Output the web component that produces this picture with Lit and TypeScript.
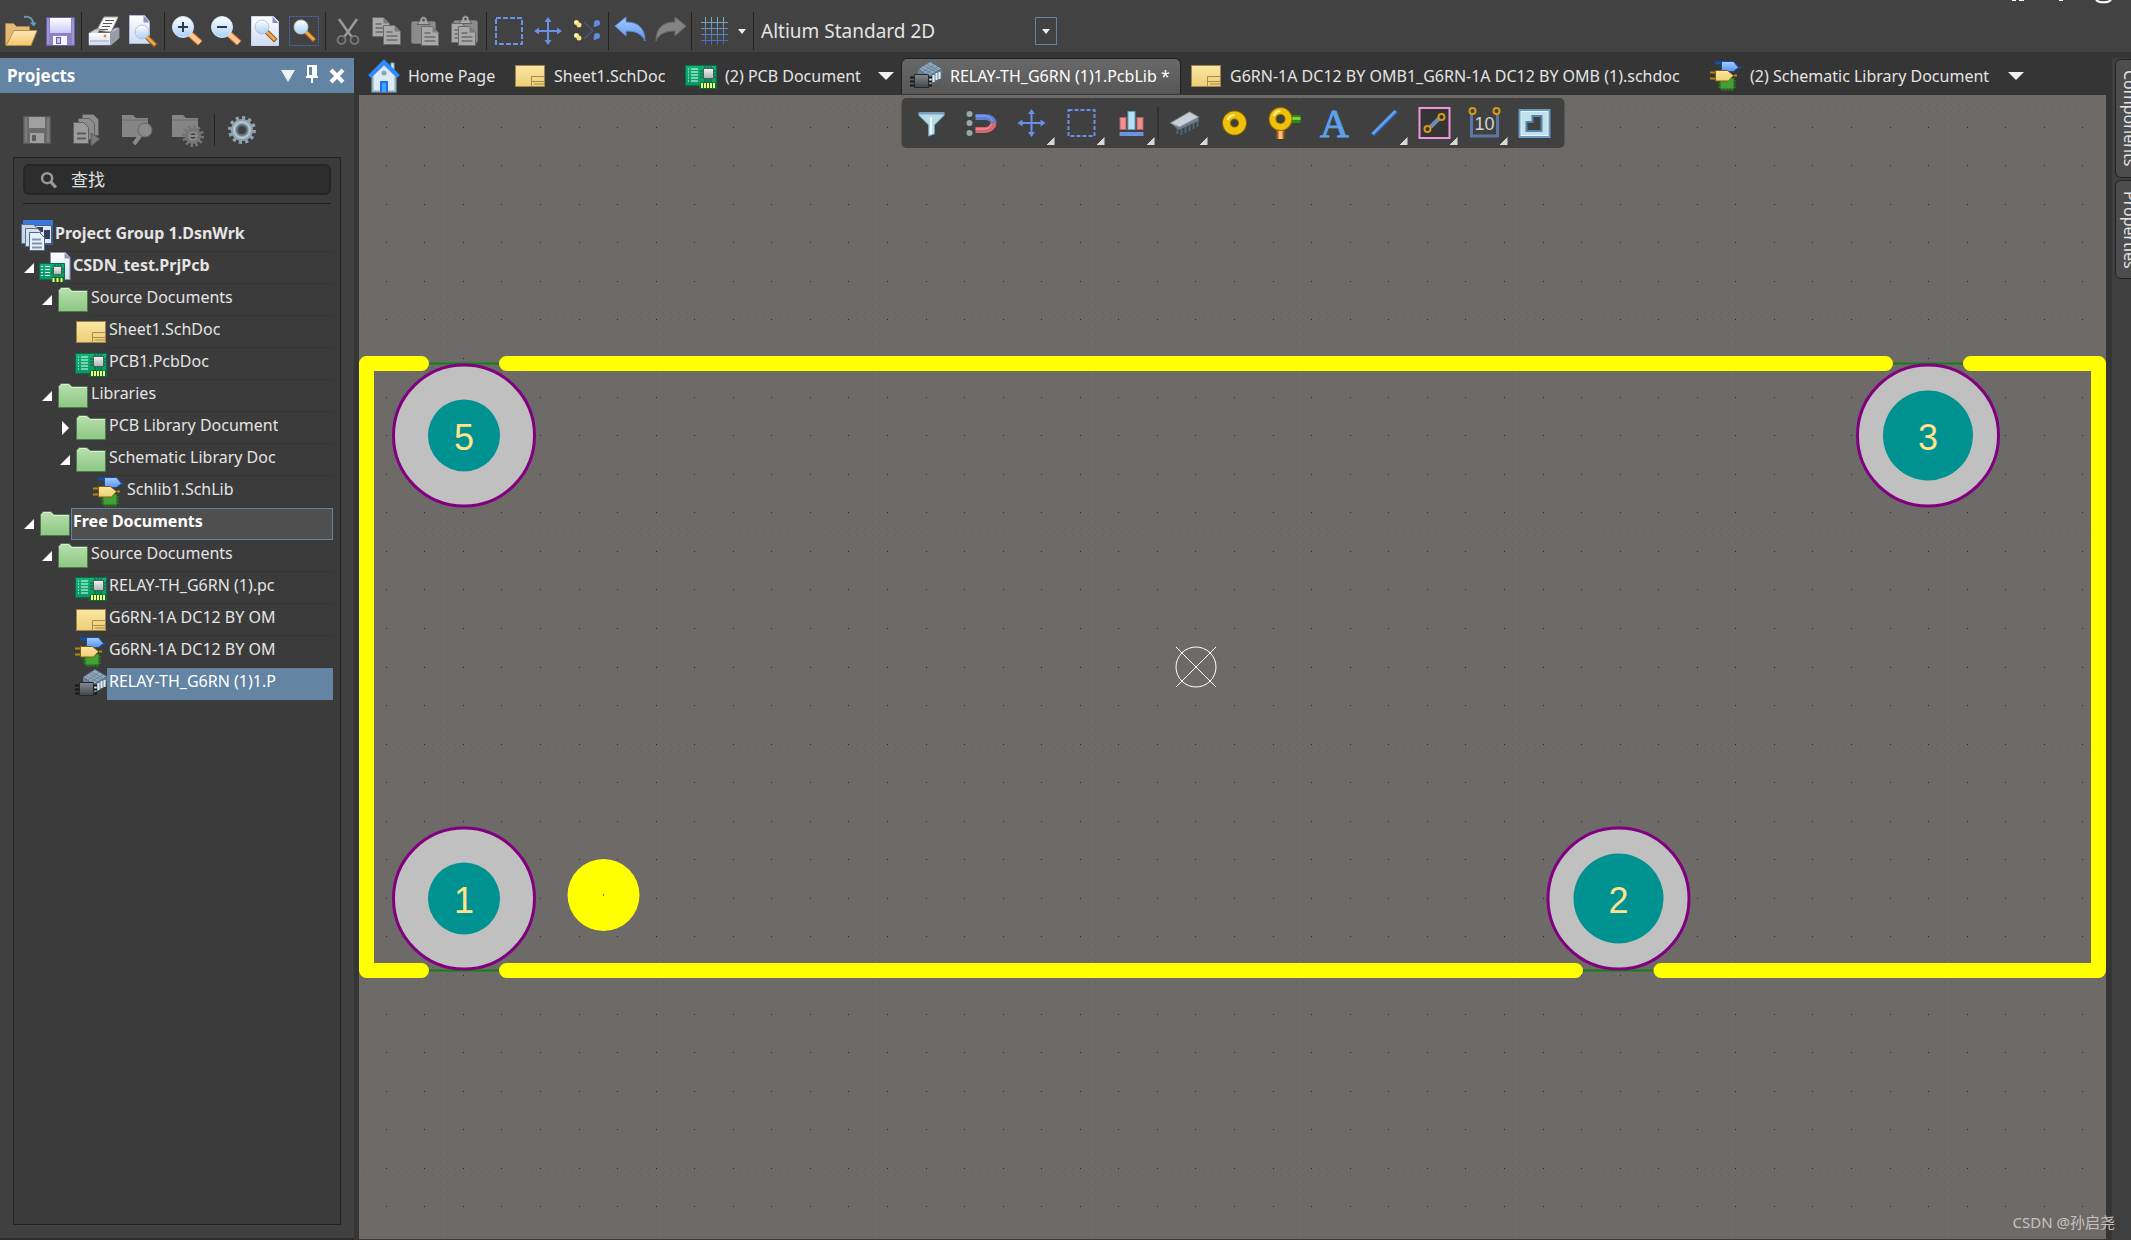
import { LitElement, html, css, svg, nothing } from "lit";
import { customElement, state } from "lit/decorators.js";
import { classMap } from "lit/directives/class-map.js";

/* ---------- shared icon fragments, all on a 32 x 32 grid ---------- */

const sheet = svg`
  <rect x="1.5" y="5.5" width="29" height="21" fill="url(#gSheet)" stroke="#9c8450"/>
  <path d="M17.5 26.5v-10h13M17.5 21.5h13M20 24h10" fill="none" stroke="#a58b50"/>`;

const board = svg`
  <path d="M.5 5.5h31v23h-17v-3h-14z" fill="url(#gBoard)" stroke="#05704a"/>
  <path d="M3 9h1m2 0h7M3 12h1m2 0h7M3 15h1m2 0h7M3 18h1m2 0h7M3 21h1m2 0h7" stroke="#e8fff4" stroke-width="1.2" fill="none"/>
  <path d="M20 6v4m3-4v4m3-4v4M15 11h4m-4 3h4m-4 3h4m10-6h2m-2 3h2m-2 3h2M20 19v4m3-4v4m3-4v4" stroke="#0b5a3c" fill="none"/>
  <rect x="18.5" y="8.5" width="10" height="10" fill="url(#gMetal)" stroke="#49605a"/>
  <path d="M15 22.5h16v6h-16z" fill="#096a2c"/>
  <path d="M17 23v5m3-5v5m3-5v5m3-5v5m3-5v5" stroke="#f4ff77" stroke-width="2" fill="none"/>`;

const folder = svg`
  <path d="M1.500 27.500V6.500L4 3.500h8l3 3h15.500v21z" fill="url(#gFolder)" stroke="#4d7a4c"/>
  <path d="M2.500 7.500l2-3h7l3 3h15" fill="none" stroke="#d8f2d2"/>`;

const gates = svg`
  <path d="M10 18h14v11H10z" fill="#43a035" stroke="#1f6a1c"/>
  <path d="M8 21h2m-2 3h2m-2 3h2m14-6h2m-2 3h2m-2 3h2M13 29v2m3-2v2m3-2v2m3-2v2" stroke="#2f8a2b" fill="none"/>
  <path d="M5 3.500h7M27 7.500h4M5 2.500h5" stroke="#114fae" stroke-width="2" fill="none"/>
  <path d="M11.500 1.500h12l5 6-5 4h-12z" fill="url(#gBlue)" stroke="#174f9f"/>
  <path d="M0 12.500h6m-6 6h6m18-3h3" stroke="#b8870f" stroke-width="2" fill="none"/>
  <path d="M5.500 10.500h12l6 5-5 5.500h-13z" fill="url(#gSheet)" stroke="#7f5c12"/>`;

const chips = svg`
  <path d="M8 10l13-8 11 7-1 9-12 7-11-6z" fill="#6d8295"/>
  <path d="M8 9l12-7.500 12 7-13 8z" fill="#8fa9bf" stroke="#50677a"/>
  <path d="M11 8l12 6M14 6l12 6M17 4.500l11 6M13 12l12-8M16 13.500l12-7" stroke="#6b8398" fill="none"/>
  <path d="M20.500 17v6m3-8v7m3-9v7m3-8v7" stroke="#e1ebf2" fill="none" stroke-width="2"/>
  <path d="M0 17.500h5m-5 4h5m-5 4h5m13-8h4m-4 4h4m-4 4h4" stroke="#15171a" stroke-width="2" fill="none"/>
  <path d="M4.500 14.500h14v13h-14z" fill="url(#gDark)" stroke="#23282d"/>`;

const miniBoard = svg`
  <path d="M11.500.500h15l4.500 5v22h-19.500z" fill="url(#gPage)" stroke="#8a8fa8"/>
  <path d="M25.500.500v6h6z" fill="#8f93b4"/>
  <path d="M.500 11.500h25v17h-11v-1h-14z" fill="url(#gBoard)" stroke="#05704a"/>
  <path d="M2 14.500h2m2 0h5M2 17.500h2m2 0h5M2 20.500h2m2 0h5M2 23.500h2m2 0h5" stroke="#e8fff4" fill="none"/>
  <path d="M16 12v3m3-3v3m3-3v3M12 17h3m-3 3h3m7-3h3m-3 3h3" stroke="#0b5a3c" fill="none"/>
  <rect x="14.500" y="14.500" width="8" height="8" fill="url(#gMetal)" stroke="#49605a"/>
  <path d="M13 25h12v5H13z" fill="#096a2c"/>
  <path d="M14.500 26v4m4-4v4m4-4v4" stroke="#f4ff77" stroke-width="2" fill="none"/>`;

const group = svg`
  <path d="M2 0h30v25H6z" fill="#3d5f9d"/><path d="M2 0h30v5H2z" fill="#3c78dc"/>
  <path d="M14 6h16v17H14z" fill="#dfe6f2"/><path d="M16 7h6v5h-6zM23 10h6v9h-6z" fill="#35425c"/>
  <path d="M.500 4.500h12l3 3v16H.500z" fill="#c7d6e6" stroke="#5c7390"/>
  <path d="M4.500 8.500h12l3 3v15h-15z" fill="#d5e2ee" stroke="#5c7390"/>
  <path d="M8.500 12.500h10l5 5v13h-15z" fill="#e8f1f8" stroke="#4d6888"/>
  <path d="M11 19.500h9m-9 4h10m-10 4h10" stroke="#7c93ad" stroke-width="2" fill="none"/>`;

const house = svg`
  <path d="M23 3h3v9h-3z" fill="#cfe8ef" stroke="#82aeba"/>
  <path d="M4.500 15L16 4.500 27.500 15v16.500h-23z" fill="#dfe9f5" stroke="#86b2bd" stroke-width="2"/>
  <path d="M1.500 16.500L16 2l14.500 14.500" fill="none" stroke="#2b8bff" stroke-width="4"/>
  <circle cx="16" cy="13" r="2.500" fill="#86a8b8"/>
  <path d="M12 21h8v11h-8z" fill="#1b72ee"/><path d="M14 23h4v9h-4z" fill="#49a0ff"/>`;

const lens = (x: number, y: number, r: number) => svg`
  <path d="M${x + r * 0.6} ${y + r * 0.6}L${x + r + 5} ${y + r + 5}" stroke="#8b5a1d" stroke-width="5" stroke-linecap="square"/>
  <path d="M${x + r * 0.6} ${y + r * 0.6}L${x + r + 5} ${y + r + 5}" stroke="#f2a64d" stroke-width="3" stroke-linecap="square"/>
  <circle cx=${x} cy=${y} r=${r} fill="url(#gLens)" stroke="#b9c3d4"/>`;

const bigLens = (plus: boolean) => svg`
  <path d="M19 19l10 9" stroke="#c96f2d" stroke-width="7"/>
  <path d="M19 19l10 9" stroke="#ffc68f" stroke-width="5"/>
  <circle cx="12" cy="12" r="10.500" fill="url(#gLens)" stroke="#d5e7fa"/>
  <path d=${plus ? "M7 12h10M12 7v10" : "M7 12h10"} stroke="#303846" stroke-width="2"/>`;

const page = svg`<path d="M2.500 1.500h22l5 5v24h-27z" fill="url(#gPage)" stroke="#c9d6ee"/><path d="M23.500 1.500v6.500h6z" fill="#8f8fbe"/>`;

const move = svg`
  <path d="M16 4v24M4 16h24" stroke="#6a8fe6" stroke-width="2"/>
  <path d="M16 2l3.500 5h-7zM16 30l3.500-5h-7zM2 16l5-3.500v7zM30 16l-5-3.500v7z" fill="#6a8fe6"/>`;

const marquee = svg`<rect x="3" y="3" width="26" height="26" fill="none" stroke="#6a8fe6" stroke-width="2" stroke-dasharray="5 2"/>`;

const greyDoc = (x: number, y: number) => svg`
  <path d="M${x} ${y}h11l6 6v13h-17z" fill="#a9a9a9" stroke="#6b6b6b"/>
  <path d="M${x + 11} ${y}v6h6z" fill="#7c7c7c"/>
  <path d="M${x + 3} ${y + 6.5}h6m-6 4h11m-11 4h11" stroke="#6a6a6a" fill="none" stroke-width="1.500"/>`;

const clip = svg`
  <rect x="1.500" y="6.500" width="24" height="22" rx="2" fill="#8c8c8c" stroke="#757575"/>
  <path d="M7 9.500h13l-3-4c0-5-7-5-7 0z" fill="#a8a8a8" stroke="#616161"/><circle cx="13.500" cy="5" r="1.500" fill="#555"/>`;

const toothed = (cx: number, cy: number, r: number, body: string, hole: string, hub: string) => svg`
  <circle cx=${cx} cy=${cy} r=${r} fill="none" stroke=${body} stroke-width="4" pathLength="48" stroke-dasharray="2 2"/>
  <circle cx=${cx} cy=${cy} r=${r - 1} fill=${body}/>
  <circle cx=${cx} cy=${cy} r=${r * 0.42} fill=${hole} stroke=${hub} stroke-width="2"/>`;

const art: Record<string, unknown> = {
  sheet, board, folder, gates, chips, miniBoard, group, house, move, marquee,
  open: svg`
    <path d="M.500 30V8.500h8l3 3h13V30z" fill="#e3b878" stroke="#a5834f"/>
    <path d="M1 30.500l8-15h23l-6 15z" fill="url(#gOpen)" stroke="#b98c46"/>
    <path d="M19 2c6-1 9 2 9.500 7" fill="none" stroke="#6b96b8" stroke-width="2"/><path d="M24.500 7.500h7l-2.500 4z" fill="#6b96b8"/>`,
  save: svg`
    <rect x="2.500" y="2.500" width="28" height="28" fill="#8c83c4" stroke="#6a62a0"/>
    <rect x="6" y="3" width="21" height="15" fill="url(#gDisk)"/>
    <path d="M4 4v25M29 4v25" stroke="#aea8dd"/>
    <rect x="9" y="21" width="14" height="9" fill="#f4f4ff"/><rect x="12.500" y="22.500" width="4" height="6" fill="#c6c6e6" stroke="#6a62a0"/>`,
  print: svg`
    <path d="M9 15l7-13h14l-7 15z" fill="#f7f7f7" stroke="#a8a8a8"/>
    <path d="M17 5.500h9m-11 3h9m-10 3h8m-10 3h8" stroke="#555"/>
    <path d="M1 18l7-4h4l-2 4h12l5-5h4v10l-8 7H1z" fill="#cfd4df" stroke="#888c98"/>
    <path d="M1 18h21v12H1z" fill="url(#gPage)"/><path d="M22 18l9-5v10l-9 7z" fill="#989ca8"/>
    <circle cx="17" cy="21" r="1.500" fill="#e88a2d"/><path d="M2 26h19" stroke="#9fa6b4"/>`,
  preview: svg`<path d="M2.500.500h15l5 6v22h-20z" fill="url(#gPage)" stroke="#aeb8d8"/><path d="M16.500.500v7h6z" fill="#8f8fbe"/>${lens(15, 17, 7)}`,
  zoomIn: bigLens(true),
  zoomOut: bigLens(false),
  zoomDoc: svg`${page}${lens(13, 12, 7)}`,
  zoomArea: svg`<rect x="1.500" y="1.500" width="29" height="29" fill="none" stroke="#5066b4" stroke-dasharray="2 1"/>${lens(13, 12, 7)}`,
  cut: svg`
    <path d="M7 4l9 13 4 5M25 4l-9 13-4 5" stroke="#9a9a9a" stroke-width="2.500" fill="none"/>
    <circle cx="9.500" cy="25" r="4" fill="none" stroke="#777" stroke-width="2"/><circle cx="22.500" cy="25" r="4" fill="none" stroke="#777" stroke-width="2"/>`,
  copy: svg`${greyDoc(1.5, 2.5)}${greyDoc(12.5, 10.5)}`,
  paste: svg`${clip}${greyDoc(11.5, 11.5)}`,
  pasteMore: svg`<g transform="translate(3 -1)">${clip}</g>${greyDoc(2.5, 8.5)}${greyDoc(9.5, 11.5)}`,
  spread: svg`
    <path d="M13 7l9 8.500-9 8.500" fill="none" stroke="#4766b5"/>
    <g fill="#f3e27c"><circle cx="5.500" cy="7.500" r="2.500"/><circle cx="8" cy="10" r="2.500"/><circle cx="5.500" cy="20.500" r="2.500"/><circle cx="8" cy="23" r="2.500"/></g>
    <g fill="#fffbdc"><circle cx="5" cy="7" r="1.500"/><circle cx="5" cy="20" r="1.500"/></g>
    <g fill="#5f8ce0"><circle cx="26" cy="8" r="3"/><circle cx="24" cy="10.500" r="1.500"/><circle cx="26" cy="21" r="3"/><circle cx="24" cy="23.500" r="1.500"/></g>`,
  undo: svg`<path d="M0 11L11 2v5c12 0 19 6 19 19-3-7-9-10-19-10v5z" fill="url(#gBlue)" stroke="#5f86d8"/>`,
  redo: svg`<path d="M32 11L21 2v5C9 7 2 13 2 26c3-7 9-10 19-10v5z" fill="#838383" stroke="#6c6c6c"/>`,
  grid: svg`<path d="M7.500 2v28m6-28v28m6-28v28m6-28v28M3 7.500h27M3 13.500h27M3 19.500h27M3 25.500h27" stroke="url(#gGrid)"/>`,
  greyDisk: svg`
    <rect x="2.500" y="2.500" width="27" height="27" fill="#6a6a6a" stroke="#595959"/><path d="M5 4v24M27 4v24" stroke="#8d8d8d"/>
    <rect x="8" y="3" width="16" height="11" fill="#a0a0a0"/><rect x="9" y="19" width="14" height="10" fill="#a0a0a0"/><path d="M11 21h4v6h-4z" fill="#5b5b5b"/>`,
  greyDocs: svg`
    <path d="M11.500.500h11l5 5v16h-16z" fill="#8d8d8d" stroke="#606060"/><path d="M7.500 4.500h11l5 5v16h-16z" fill="#8d8d8d" stroke="#606060"/>
    <path d="M2.500 8.500h10l5 5v16h-15z" fill="#9c9c9c" stroke="#606060"/><path d="M6 19.500h9m-9 5h9" stroke="#5b5b5b" stroke-width="2"/>
    <path d="M20 19l9 6-9 7z" fill="#7a7a7a" stroke="#5d5d5d"/>`,
  folderFind: svg`<path d="M1 1h11l3 3h12v19H1z" fill="#858585"/><path d="M1 6h26" stroke="#6c6c6c"/><circle cx="24" cy="16" r="7" fill="#8a8a8a" stroke="#666"/><path d="M19 22l-6 8" stroke="#8a8a8a" stroke-width="4"/>`,
  folderGear: svg`<path d="M1 1h11l3 3h12v19H1z" fill="#858585"/><path d="M1 6h26" stroke="#6c6c6c"/>${toothed(22, 22, 9, "#757575", "#404040", "#8a8a8a")}<path d="M18 22h8" stroke="#8a8a8a" stroke-width="2"/>`,
  gear: svg`
    ${toothed(16, 16, 12, "#8fa3ae", "#404040", "#62747e")}
    <circle cx="16" cy="16" r="8" fill="none" stroke="#b4c6cf" stroke-width="2"/>`,
  funnel: svg`<path d="M3.500 5.500h25v3L19 18v9l-6 2V18L3.500 8.500z" fill="#b9dbe4" stroke="#6f9cb3"/><path d="M3 6.500h26" stroke="#7aa2c0" stroke-width="2"/><path d="M15.500 10v17" stroke="#e8f8fb" stroke-width="2"/>`,
  magnet: svg`
    <g fill="#93abab"><circle cx="4" cy="7" r="3"/><circle cx="4" cy="16" r="3"/><circle cx="4" cy="26" r="3"/></g>
    <path d="M10 10h9c6 0 9 3 9 6" fill="none" stroke="#5f80d0" stroke-width="6"/><path d="M10 23h9c6 0 9-4 9-7" fill="none" stroke="#d86670" stroke-width="6"/>
    <path d="M10 9h9c4 0 7 2 8 5" fill="none" stroke="#8eabf0"/><path d="M10 22h9c3 0 6-2 7-5" fill="none" stroke="#f7a7aa"/>`,
  area: svg`<rect x="3" y="3" width="26" height="26" fill="none" stroke="#6a8fe6" stroke-width="2" stroke-dasharray="4 2"/>`,
  align: svg`
    <rect x="4.500" y="10.500" width="6" height="12" fill="#ed9290" stroke="#b85f61"/><rect x="21.500" y="10.500" width="6" height="12" fill="#ed9290" stroke="#b85f61"/>
    <rect x="12.500" y="4.500" width="7" height="18" fill="#b5e0ef" stroke="#5f9fc3"/><rect x="4" y="25" width="24" height="4" fill="#6a92e0"/>`,
  part: svg`
    <path d="M13 20v8m4-10v8m4-10v8m4-10v8m4-10v8M9 21v6" stroke="#4f6475" stroke-width="2"/>
    <path d="M2 16L21 5l9 5v4L10 23z" fill="#6b7c8c"/><path d="M2 16L21 5l9 5-19 10z" fill="#c7d0d8" stroke="#8d99a5"/>`,
  ring: svg`<circle cx="16" cy="16" r="8" fill="none" stroke="#8a6700" stroke-width="9"/><circle cx="16" cy="16" r="8" fill="none" stroke="#edc009" stroke-width="7"/><path d="M9 13a8 8 0 0 1 7-5" fill="none" stroke="#fff29d" stroke-width="2"/>`,
  via: svg`
    <path d="M20 8h12v8H20z" fill="#2e8b12"/><path d="M22 10h10v3H22z" fill="#7bd03c"/><path d="M8 18h8v14H8z" fill="#a85d12"/><path d="M10 20h4v12h-4z" fill="#ffc172"/>
    <circle cx="12" cy="12" r="8" fill="none" stroke="#8a6700" stroke-width="8"/><circle cx="12" cy="12" r="8" fill="none" stroke="#edc009" stroke-width="6"/><path d="M5 9a8 8 0 0 1 7-5" fill="none" stroke="#fff29d" stroke-width="2"/>`,
  letter: svg`<text x="16" y="30" text-anchor="middle" class="serif" font-size="40" fill="#5da0ec" stroke="#5da0ec">A</text>`,
  line: svg`<path d="M4 28L28 4" stroke="#2a62a8" stroke-width="4"/><path d="M4 27L27 4" stroke="#5fa2ee" stroke-width="3"/>`,
  track: svg`
    <rect x="1" y="1" width="30" height="30" fill="#343434" stroke="#ee96dc" stroke-width="2"/>
    <path d="M12 20l9-9" stroke="#7089b8" stroke-width="4"/><g fill="#303030" stroke="#d39a14" stroke-width="2"><circle cx="9" cy="22" r="3"/><circle cx="23" cy="10" r="3"/></g>`,
  dimension: svg`
    <path d="M3 7v22h26V7" fill="none" stroke="#5c76a6" stroke-width="3"/>
    <g fill="#404040" stroke="#d39a14" stroke-width="2"><circle cx="4" cy="4" r="3"/><circle cx="28" cy="4" r="3"/></g>
    <text x="16" y="23" text-anchor="middle" class="digit" font-size="18" fill="#d3d3d3">10</text>`,
  region: svg`<rect x="1" y="3" width="30" height="27" fill="#e6f7fb" stroke="#6a9abf" stroke-width="2"/><path d="M3 28V5h26v23z" fill="#c3e1ea"/><path d="M8 24V15h6V9h9v15z" fill="#404040" stroke="#5285ad" stroke-width="2"/>`,
  find: svg`<circle cx="13" cy="13" r="8" fill="none" stroke="#9a9a9a" stroke-width="4"/><path d="M19 19l8 9" stroke="#9a9a9a" stroke-width="5"/>`,
};

const icon = (name: string) => html`<svg class="icon" viewBox="0 0 32 32" aria-hidden="true">${art[name]}</svg>`;

/* ---------- data ---------- */

const mainTools: [string, string][][] = [
  [["open", "Open"], ["save", "Save"]],
  [["print", "Print"], ["preview", "Preview"]],
  [["zoomIn", "Zoom in"], ["zoomOut", "Zoom out"], ["zoomDoc", "Fit document"], ["zoomArea", "Zoom area"]],
  [["cut", "Cut"], ["copy", "Copy"], ["paste", "Paste"], ["pasteMore", "Paste special"]],
  [["marquee", "Select"], ["move", "Move"], ["spread", "Deselect"]],
  [["undo", "Undo"], ["redo", "Redo"]],
];

const panelTools: [string, string][] = [
  ["greyDisk", "Save project"], ["greyDocs", "Compile"], ["folderFind", "Explore"], ["folderGear", "Project options"],
];

const floatTools: [string, string, boolean][] = [
  ["funnel", "Filter", false], ["magnet", "Snap", false], ["move", "Move", true], ["area", "Select area", true], ["align", "Align", true],
  ["part", "Component body", true], ["ring", "Pad", false], ["via", "Via", false], ["letter", "String", false], ["line", "Line", true],
  ["track", "Track", true], ["dimension", "Dimension", true], ["region", "Region", false],
];

interface Tab { icon: string; label: string; more?: boolean }
const tabs: Tab[] = [
  { icon: "house", label: "Home Page" },
  { icon: "sheet", label: "Sheet1.SchDoc" },
  { icon: "board", label: "(2) PCB Document", more: true },
  { icon: "chips", label: "RELAY-TH_G6RN (1)1.PcbLib *" },
  { icon: "sheet", label: "G6RN-1A DC12 BY OMB1_G6RN-1A DC12 BY OMB (1).schdoc" },
  { icon: "gates", label: "(2) Schematic Library Document", more: true },
];

interface Row { level: number; icon: string; label: string; open?: boolean; bold?: boolean; focus?: boolean }
const rows: Row[] = [
  { level: 0, icon: "group", label: "Project Group 1.DsnWrk", bold: true },
  { level: 1, icon: "miniBoard", label: "CSDN_test.PrjPcb", open: true, bold: true },
  { level: 2, icon: "folder", label: "Source Documents", open: true },
  { level: 3, icon: "sheet", label: "Sheet1.SchDoc" },
  { level: 3, icon: "board", label: "PCB1.PcbDoc" },
  { level: 2, icon: "folder", label: "Libraries", open: true },
  { level: 3, icon: "folder", label: "PCB Library Document", open: false },
  { level: 3, icon: "folder", label: "Schematic Library Doc", open: true },
  { level: 4, icon: "gates", label: "Schlib1.SchLib" },
  { level: 1, icon: "folder", label: "Free Documents", open: true, bold: true, focus: true },
  { level: 2, icon: "folder", label: "Source Documents", open: true },
  { level: 3, icon: "board", label: "RELAY-TH_G6RN (1).pc" },
  { level: 3, icon: "sheet", label: "G6RN-1A DC12 BY OM" },
  { level: 3, icon: "gates", label: "G6RN-1A DC12 BY OM" },
  { level: 3, icon: "chips", label: "RELAY-TH_G6RN (1)1.P" },
];

/* ---------- footprint drawing; board space has its origin at the sheet corner ---------- */

const boardW = 1747;
const boardH = 1144;
const pitch = 38.56;
const anchor = { x: 837, y: 572 };

function dots(step: number): string {
  const xs: number[] = [];
  const ys: number[] = [];
  for (let x = anchor.x % step; x < boardW; x += step) xs.push(Math.floor(x));
  for (let y = anchor.y % step; y < boardH; y += step) ys.push(Math.floor(y));
  return ys.map((y) => xs.map((x) => `M${x} ${y}h1v1h-1z`).join("")).join("");
}
const minorDots = dots(pitch / 5);
const majorDots = dots(pitch);

const pads = [
  { n: "5", x: 105, y: 340.5, hole: 36 },
  { n: "3", x: 1569, y: 340.5, hole: 45 },
  { n: "1", x: 105, y: 803.5, hole: 36 },
  { n: "2", x: 1259.5, y: 803.5, hole: 45 },
];

@customElement("app-root")
export class AppRoot extends LitElement {
  @state() private activeTab = 3;
  @state() private selected = 14;

  static styles = css`
    :host {
      display: block;
      font-family: "Noto Sans", "Open Sans", "Noto Sans CJK SC", sans-serif;
      font-size: 16px;
      color: #e4e4e4;
    }
    * { box-sizing: border-box; }
    button, input, select { font: inherit; color: inherit; background: none; border: 0; padding: 0; margin: 0; }
    button { display: flex; align-items: center; justify-content: center; }
    .defs { position: absolute; width: 0; height: 0; }
    .icon { width: 32px; height: 32px; flex: none; display: block; overflow: visible; }
    .serif { font-family: "Liberation Serif", serif; }
    .digit { font-family: "Liberation Sans", sans-serif; }
    .app { height: 100vh; display: grid; grid-template-rows: 52px minmax(0, 1fr); background: #353535; overflow: hidden; }

    .toolbar { display: flex; align-items: flex-start; padding: 10px 0 0 1px; background: #424242; position: relative; }
    .tool { width: 39px; height: 42px; }
    .rule { width: 5px; height: 38px; margin-top: 2px; flex: none; background: linear-gradient(#222, #222) center / 1px 100% no-repeat; }
    .more { width: 18px; height: 42px; }
    .down { width: 0; height: 0; border-style: solid; border-color: #f0f0f0 transparent transparent; border-width: 5px 4px 0; }
    .big { border-width: 8px 8px 0; }
    .deep { border-width: 12px 7px 0; }
    .view { width: 301px; height: 42px; display: grid; align-items: center; }
    .view > * { grid-area: 1 / 1; }
    .view select { appearance: none; width: 100%; height: 28px; padding-left: 5px; font-size: 19px; outline: 0; }
    .drop { justify-self: end; width: 22px; height: 28px; border: 1px solid #6384a3; display: grid; place-items: center; pointer-events: none; }
    .scrap { position: absolute; right: 18px; top: 0; width: 102px; height: 4px; }

    .main { display: grid; grid-template-columns: 354px minmax(0, 1fr) 20px; column-gap: 5px; padding-top: 6px; min-height: 0; }
    .panel { display: flex; flex-direction: column; background: #404040; border-bottom: 2px solid #2c2c2c; min-height: 0; }
    .title { height: 35px; flex: none; display: flex; align-items: center; padding: 0 9px 0 7px; background: #6384a3; color: #fff; }
    .title h2 { flex: 1; margin: 0; font-size: 17px; line-height: 24px; }
    .title svg { display: block; }
    .titlebtns { display: flex; align-items: center; gap: 10px; }
    .ptools { display: flex; align-items: center; padding: 10px 0 0 12px; height: 64px; flex: none; }
    .ptool { width: 50px; height: 42px; }
    .ptools .rule { height: 32px; margin: 0; }
    .box { flex: 1; margin: 0 13px 13px 13px; border: 1px solid #222; background: #3b3b3b; display: flex; flex-direction: column; padding: 6px 7px 0; min-height: 0; overflow: hidden; }
    .search { margin: 0 2px; height: 31px; flex: none; display: flex; align-items: center; gap: 12px; padding-left: 14px; background: #2d2d2d; border: 2px solid #262626; border-radius: 6px; }
    .search .icon { width: 20px; height: 20px; }
    .search input { flex: 1; min-width: 0; outline: 0; height: 24px; font-size: 17px; }
    .search input::placeholder { color: #e0e0e0; opacity: 1; }
    .line { height: 1px; background: #222; margin: 8px 2px 16px; flex: none; }
    ul { list-style: none; margin: 0; padding: 0; }
    .row { display: flex; height: 32px; }
    .l1 { padding-left: 3px; } .l2 { padding-left: 21px; } .l3 { padding-left: 39px; } .l4 { padding-left: 57px; }
    .twist { width: 15px; height: 32px; flex: none; justify-content: flex-start; }
    .label { flex: 1; min-width: 0; height: 32px; padding: 0 54px 0 2px; border-bottom: 1px solid #353535; justify-content: flex-start; align-items: flex-start; line-height: 26px; }
    .label span { overflow: hidden; white-space: nowrap; }
    .bold { font-weight: 700; }
    .focus { border: 1px solid #6384a3; background: #4f4f4f; color: #fff; padding-left: 1px; line-height: 24px; }
    .sel { background: #6384a3; border-color: #6384a3; color: #fff; }

    .work { display: grid; grid-template-rows: 37px minmax(0, 1fr); min-height: 0; }
    .tabs { display: grid; grid-template-columns: 146fr 171fr 225fr 280fr 520fr 330fr 75fr; min-width: 0; overflow: hidden; }
    .tab { min-width: 0; gap: 8px; padding: 0 6px 1px 8px; justify-content: flex-start; white-space: nowrap; border: 1px solid transparent; border-bottom: 0; margin-bottom: 1px; }
    .tab .down { margin-left: auto; }
    .active { background: linear-gradient(#686868, #575757); border-color: #202020; border-radius: 6px 6px 0 0; color: #fff; }
    .stage { position: relative; background: #6e6a68; border-bottom: 1px solid #383838; min-height: 0; }
    .sheet { display: block; width: 100%; height: 100%; }
    .float { position: absolute; left: 50%; top: 3px; transform: translateX(-50%); display: flex; align-items: center; padding: 0 5px; background: #404040; border-radius: 5px; }
    .ftool { width: 50px; height: 50px; position: relative; }
    .float .rule { width: 3px; height: 32px; margin: 0; }
    .corner { position: absolute; right: 2px; bottom: 3px; width: 8px; height: 8px; background: linear-gradient(135deg, transparent 50%, #d8d8d8 50%); }
    .mark { position: absolute; right: -9px; bottom: 5px; font-size: 15px; line-height: 24px; color: #c4c2c1; z-index: 1; }

    .rail { background: #3f3f3f; display: flex; flex-direction: column; gap: 2px; padding: 1px 0 0 3px; margin-left: 1px; overflow: hidden; }
    .side { writing-mode: vertical-rl; width: 30px; padding: 10px 0; background: #4d4d4d; border: 1px solid #222; border-radius: 6px; justify-content: flex-start; align-items: center; line-height: 24px; flex: none; }
  `;

  private renderDefs() {
    const grad = (id: string, a: string, b: string) =>
      svg`<linearGradient id=${id} x1="0" y1="0" x2="0" y2="1"><stop offset="0" stop-color=${a}/><stop offset="1" stop-color=${b}/></linearGradient>`;
    return html`<svg class="defs" aria-hidden="true"><defs>
      ${grad("gSheet", "#fbe6a2", "#edcf74")}${grad("gBoard", "#12b17a", "#08935f")}${grad("gMetal", "#f3f3f3", "#a9b4b0")}
      ${grad("gFolder", "#b9dfae", "#8cc883")}${grad("gBlue", "#a5ccff", "#5b95ee")}${grad("gDark", "#83898f", "#3f454b")}
      ${grad("gPage", "#ffffff", "#cfdcf2")}${grad("gLens", "#ffffff", "#a9d0f7")}${grad("gOpen", "#ffe9b8", "#f3c56d")}${grad("gDisk", "#ffffff", "#c9c8f6")}
      <linearGradient id="gGrid" gradientUnits="userSpaceOnUse" x1="0" y1="2" x2="0" y2="30"><stop offset="0" stop-color="#7bb3c4"/><stop offset="1" stop-color="#4561b5"/></linearGradient>
    </defs></svg>`;
  }

  private renderToolbar() {
    return html`<header class="toolbar">
      ${mainTools.map((g) => html`${g.map(([i, t]) => html`<button class="tool" aria-label=${t}>${icon(i)}</button>`)}<span class="rule"></span>`)}
      <button class="tool" aria-label="Grid">${icon("grid")}</button>
      <button class="more" aria-label="Grid options"><span class="down"></span></button>
      <span class="rule"></span>
      <div class="view">
        <select aria-label="View configuration"><option>Altium Standard 2D</option></select>
        <span class="drop"><span class="down"></span></span>
      </div>
      <svg class="scrap" viewBox="0 0 102 4" aria-hidden="true"><path d="M1 0h4v1H1zM8 0h5v1H8zM48 0h4v1h-4z" fill="#fff"/><path d="M85 0c3 3 12 3 15 0" fill="none" stroke="#fff" stroke-width="2"/></svg>
    </header>`;
  }

  private renderPanel() {
    return html`<aside class="panel">
      <div class="title">
        <h2>Projects</h2>
        <div class="titlebtns">
          <button aria-label="Panel menu"><span class="down deep"></span></button>
          <button aria-label="Pin"><svg width="14" height="22" viewBox="0 0 14 22"><path d="M3 1h8v10H3zM1 12h12M7 12v6" fill="none" stroke="#fff" stroke-width="2"/><path d="M7 1h4v10H7z" fill="#fff"/></svg></button>
          <button aria-label="Close"><svg width="16" height="16" viewBox="0 0 16 16"><path d="M2 2l12 12M14 2L2 14" stroke="#fff" stroke-width="4"/></svg></button>
        </div>
      </div>
      <div class="ptools">
        ${panelTools.map(([i, t]) => html`<button class="ptool" aria-label=${t}>${icon(i)}</button>`)}
        <span class="rule"></span>
        <button class="ptool" aria-label="Settings">${icon("gear")}</button>
      </div>
      <div class="box">
        <label class="search">${icon("find")}<input type="text" placeholder="查找" aria-label="查找"></label>
        <div class="line"></div>
        <ul>${rows.map((r, i) => this.renderRow(r, i))}</ul>
      </div>
    </aside>`;
  }

  private renderRow(r: Row, i: number) {
    const twist = r.open === undefined
      ? html`<span class="twist"></span>`
      : html`<button class="twist" aria-label="Expand" aria-expanded=${r.open}>
          <svg width="11" height="14" viewBox="0 0 11 14"><path d=${r.open ? "M10 2v10H0z" : "M2 0l7 7-7 7z"} fill="#fff"/></svg></button>`;
    return html`<li class="row l${r.level}">
      ${r.level ? twist : nothing}${icon(r.icon)}
      <button class=${classMap({ label: true, bold: !!r.bold, focus: !!r.focus, sel: this.selected === i })}
        @click=${() => (this.selected = i)}><span>${r.label}</span></button>
    </li>`;
  }

  private renderSheet() {
    const y1 = 268.5, y2 = 875.5;
    return html`<svg class="sheet" viewBox="0 0 ${boardW} ${boardH}" role="img" aria-label="Footprint">
      <g shape-rendering="crispEdges"><path d=${minorDots} fill="#625f5d"/><path d=${majorDots} fill="#2c2b2a"/></g>
      <path d="M62 ${y1}h86M1526 ${y1}h86M62 ${y2}h86M1216 ${y2}h86" stroke="#138013" stroke-width="2"/>
      <path d="M62.500 ${y1}H7.500V${y2}H62.500M147.500 ${y1}H1526.500M1611.500 ${y1}H1739.500V${y2}H1302M1216.500 ${y2}H147.500"
        fill="none" stroke="#ff0" stroke-width="15" stroke-linecap="round" stroke-linejoin="round"/>
      ${pads.map((p) => svg`
        <circle cx=${p.x} cy=${p.y} r="70.500" fill="#c0c0c0" stroke="#800080" stroke-width="3"/>
        <circle cx=${p.x} cy=${p.y} r=${p.hole} fill="#009191"/>
        <text x=${p.x} y=${p.y + 14} text-anchor="middle" class="digit" font-size="36" fill="#ffe38b">${p.n}</text>`)}
      <circle cx="244.500" cy="800" r="36" fill="#ff0"/><path d="M244 799h1v2h-1z" fill="#666"/>
      <g fill="none" stroke="#fff"><circle cx="837" cy="572" r="20"/><path d="M817 552l40 40M857 552l-40 40"/></g>
    </svg>`;
  }

  render() {
    return html`${this.renderDefs()}
      <div class="app">
        ${this.renderToolbar()}
        <div class="main">
          ${this.renderPanel()}
          <main class="work">
            <nav class="tabs">${tabs.map((t, i) => html`
              <button class=${classMap({ tab: true, active: this.activeTab === i })} @click=${() => (this.activeTab = i)}>
                ${icon(t.icon)}<span>${t.label}</span>${t.more ? html`<span class="down big"></span>` : nothing}
              </button>`)}</nav>
            <div class="stage">
              ${this.renderSheet()}
              <div class="float">${floatTools.map(([i, t, m], k) => html`${k === 5 ? html`<span class="rule"></span>` : nothing}
                <button class="ftool" aria-label=${t}>${icon(i)}${m ? html`<span class="corner"></span>` : nothing}</button>`)}</div>
              <div class="mark">CSDN @孙启尧</div>
            </div>
          </main>
          <aside class="rail"><button class="side">Components</button><button class="side">Properties</button></aside>
        </div>
      </div>`;
  }
}
